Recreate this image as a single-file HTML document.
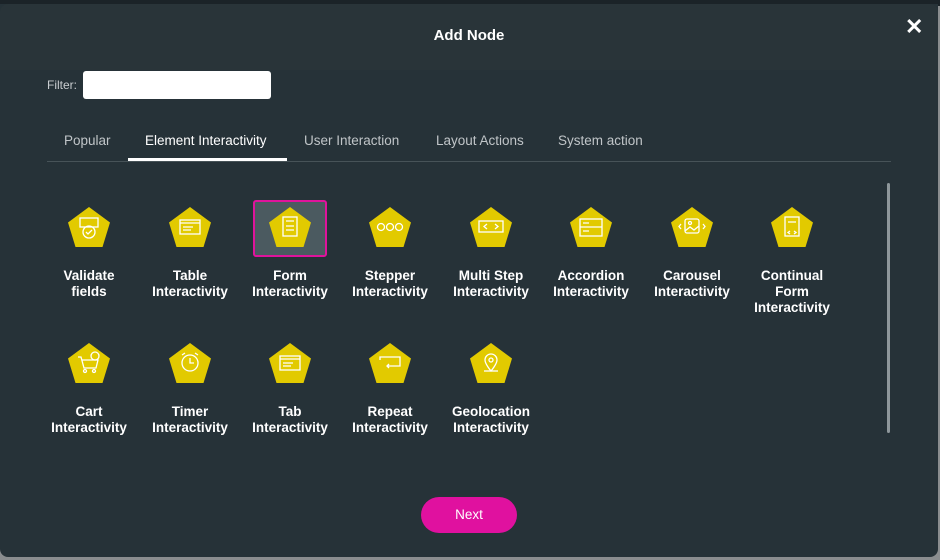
<!DOCTYPE html>
<html><head><meta charset="utf-8"><style>
*{margin:0;padding:0;box-sizing:border-box}
body{width:940px;height:560px;background:#8a8d8f;font-family:"Liberation Sans",sans-serif;position:relative;overflow:hidden}
.top{position:absolute;left:0;top:0;width:940px;height:6px;background:#1b2328}
.modal{position:absolute;left:0;top:4px;width:938px;height:553px;background:#263238;border-radius:0 0 8px 8px}
.hdr{position:absolute;left:0;top:0;width:938px;height:66px;background:#293439;border-radius:8px 8px 0 0}
.title{position:absolute;top:23px;width:938px;text-align:center;color:#fff;font-weight:bold;font-size:15px}
.x{position:absolute;left:905px;top:10px;color:#fff;font-size:22px;font-weight:bold}
.flab{position:absolute;left:47px;top:74px;color:#c9cdd0;font-size:12px}
.fin{position:absolute;left:83px;top:67px;width:188px;height:28px;background:#fff;border-radius:3px}
.tab{position:absolute;top:129px;color:#c0c5c8;font-size:13.5px}
.line{position:absolute;left:47px;top:157px;width:844px;height:1px;background:#475358}
.ul{position:absolute;left:128px;top:154px;width:159px;height:3px;background:#fff}
.scroll{position:absolute;left:887px;top:179px;width:3px;height:250px;background:#8e979b;border-radius:2px}
.item{position:absolute;width:100px;text-align:center;color:#fff;font-weight:bold;font-size:13.5px;line-height:16px}
.item svg{display:block;margin:0 auto 21px}
.sel{position:absolute;left:253px;top:196px;width:74px;height:57px;background:#4b5a60;border:2px solid #e0139c;border-radius:3px}
.next{position:absolute;left:421px;top:493px;width:96px;height:36px;background:#e0119f;border-radius:18px;color:#fff;font-size:13.5px;text-align:center;line-height:36px}
</style></head><body>
<div class="top"></div>
<div class="modal">
<div class="hdr"></div>
<div class="title">Add Node</div>
<div class="x">✕</div>
<div class="flab">Filter:</div>
<div class="fin"></div>
<div class="tab" style="left:64px">Popular</div>
<div class="tab" style="left:145px;color:#fff">Element Interactivity</div>
<div class="tab" style="left:304px">User Interaction</div>
<div class="tab" style="left:436px">Layout Actions</div>
<div class="tab" style="left:558px">System action</div>
<div class="line"></div><div class="ul"></div>
<div class="scroll"></div>
<div class="sel"></div>
<div class="next">Next</div>
</div>
<svg width="0" height="0" style="position:absolute"><defs><polygon id="p" points="21,0 42,15.5 34.5,40 7.5,40 0,15.5" fill="#e2ca00"/></defs></svg>
<div class="item" style="left:39px;top:207px"><svg width="42" height="40"><use href="#p"/><g stroke="#fff" fill="none" stroke-width="1.3"><rect x="12" y="11" width="18" height="9"/><circle cx="21" cy="25" r="6"/><path d="M18 25l2 2 4-4"/></g></svg>Validate<br>fields</div>
<div class="item" style="left:140px;top:207px"><svg width="42" height="40"><use href="#p"/><g stroke="#fff" fill="none" stroke-width="1.3"><rect x="11" y="13" width="20" height="14"/><path d="M11 16h20M14 20h10M14 23h8"/></g></svg>Table<br>Interactivity</div>
<div class="item" style="left:240px;top:207px"><svg width="42" height="40"><use href="#p"/><g stroke="#fff" fill="none" stroke-width="1.3"><rect x="14" y="10" width="14" height="19"/><path d="M17 14h8M17 19h8M17 23h8"/></g></svg>Form<br>Interactivity</div>
<div class="item" style="left:340px;top:207px"><svg width="42" height="40"><use href="#p"/><g stroke="#fff" fill="none" stroke-width="1.3"><circle cx="12" cy="20" r="3.5"/><circle cx="21" cy="20" r="3.5"/><circle cx="30" cy="20" r="3.5"/></g></svg>Stepper<br>Interactivity</div>
<div class="item" style="left:441px;top:207px"><svg width="42" height="40"><use href="#p"/><g stroke="#fff" fill="none" stroke-width="1.3"><rect x="9" y="14" width="24" height="11"/><path d="M17 17l-3 2.5 3 2.5M25 17l3 2.5-3 2.5"/></g></svg>Multi Step<br>Interactivity</div>
<div class="item" style="left:541px;top:207px"><svg width="42" height="40"><use href="#p"/><g stroke="#fff" fill="none" stroke-width="1.3"><rect x="10" y="12" width="22" height="17"/><path d="M10 20h22M13 16h6M13 24h6"/></g></svg>Accordion<br>Interactivity</div>
<div class="item" style="left:642px;top:207px"><svg width="42" height="40"><use href="#p"/><g stroke="#fff" fill="none" stroke-width="1.3"><rect x="14" y="12" width="14" height="14" rx="2"/><circle cx="19" cy="16" r="1.5"/><path d="M10 17l-2 2.5 2 2.5M32 17l2 2.5-2 2.5M14 24l5-4 4 3 5-4"/></g></svg>Carousel<br>Interactivity</div>
<div class="item" style="left:742px;top:207px"><svg width="42" height="40"><use href="#p"/><g stroke="#fff" fill="none" stroke-width="1.3"><rect x="14" y="10" width="14" height="19"/><path d="M17 15h8M19 24l-2 1.5 2 1.5M23 24l2 1.5-2 1.5"/></g></svg>Continual<br>Form<br>Interactivity</div>
<div class="item" style="left:39px;top:343px"><svg width="42" height="40"><use href="#p"/><g stroke="#fff" fill="none" stroke-width="1.3"><path d="M10 14h3l3 11h12l2-8H14"/><circle cx="17" cy="28" r="1.5"/><circle cx="26" cy="28" r="1.5"/><circle cx="27" cy="13" r="4"/></g></svg>Cart<br>Interactivity</div>
<div class="item" style="left:140px;top:343px"><svg width="42" height="40"><use href="#p"/><g stroke="#fff" fill="none" stroke-width="1.3"><circle cx="21" cy="20" r="8"/><path d="M21 15v5h4M13 12l3-2M29 12l-3-2"/></g></svg>Timer<br>Interactivity</div>
<div class="item" style="left:240px;top:343px"><svg width="42" height="40"><use href="#p"/><g stroke="#fff" fill="none" stroke-width="1.3"><rect x="11" y="13" width="20" height="14"/><path d="M11 16h20M14 20h10M14 23h8"/></g></svg>Tab<br>Interactivity</div>
<div class="item" style="left:340px;top:343px"><svg width="42" height="40"><use href="#p"/><g stroke="#fff" fill="none" stroke-width="1.3"><path d="M11 17v-3h20v9H18M20 21l-2 2 2 2"/></g></svg>Repeat<br>Interactivity</div>
<div class="item" style="left:441px;top:343px"><svg width="42" height="40"><use href="#p"/><g stroke="#fff" fill="none" stroke-width="1.3"><path d="M21 28s-6-7-6-11a6 6 0 0112 0c0 4-6 11-6 11z"/><circle cx="21" cy="17" r="2"/><path d="M14 28h14"/></g></svg>Geolocation<br>Interactivity</div>
</body></html>
